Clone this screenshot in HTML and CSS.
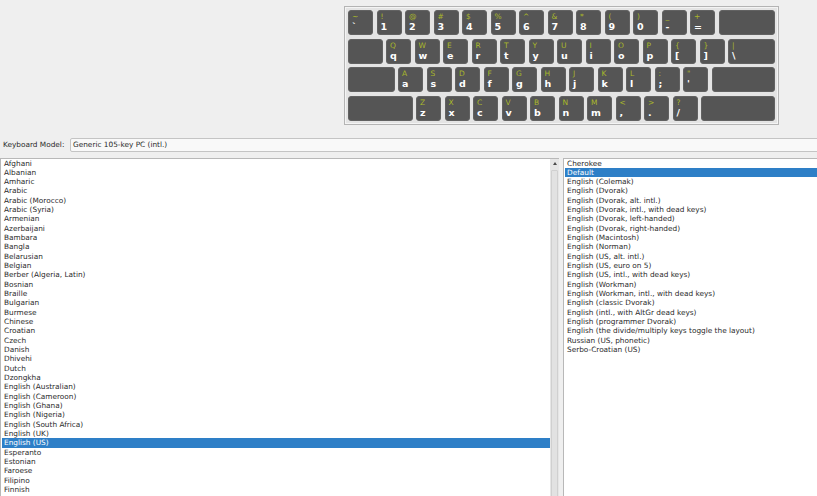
FILE: index.html
```html
<!DOCTYPE html>
<html>
<head>
<meta charset="utf-8">
<link rel="stylesheet" href="styles.css">
</head>
<body>
<div class="top">
  <div class="kbd">
    <div class="krow">
      <div class="key"><span class="up">~</span><span class="lo">`</span></div>
      <div class="key"><span class="up">!</span><span class="lo">1</span></div>
      <div class="key"><span class="up">@</span><span class="lo">2</span></div>
      <div class="key"><span class="up">#</span><span class="lo">3</span></div>
      <div class="key"><span class="up">$</span><span class="lo">4</span></div>
      <div class="key"><span class="up">%</span><span class="lo">5</span></div>
      <div class="key"><span class="up">^</span><span class="lo">6</span></div>
      <div class="key"><span class="up">&amp;</span><span class="lo">7</span></div>
      <div class="key"><span class="up">*</span><span class="lo">8</span></div>
      <div class="key"><span class="up">(</span><span class="lo">9</span></div>
      <div class="key"><span class="up">)</span><span class="lo">0</span></div>
      <div class="key"><span class="up">_</span><span class="lo">-</span></div>
      <div class="key"><span class="up">+</span><span class="lo">=</span></div>
      <div class="key fill"></div>
    </div>
    <div class="krow">
      <div class="key tab"></div>
      <div class="key"><span class="up">Q</span><span class="lo">q</span></div>
      <div class="key"><span class="up">W</span><span class="lo">w</span></div>
      <div class="key"><span class="up">E</span><span class="lo">e</span></div>
      <div class="key"><span class="up">R</span><span class="lo">r</span></div>
      <div class="key"><span class="up">T</span><span class="lo">t</span></div>
      <div class="key"><span class="up">Y</span><span class="lo">y</span></div>
      <div class="key"><span class="up">U</span><span class="lo">u</span></div>
      <div class="key"><span class="up">I</span><span class="lo">i</span></div>
      <div class="key"><span class="up">O</span><span class="lo">o</span></div>
      <div class="key"><span class="up">P</span><span class="lo">p</span></div>
      <div class="key"><span class="up">{</span><span class="lo">[</span></div>
      <div class="key"><span class="up">}</span><span class="lo">]</span></div>
      <div class="key fill"><span class="up">|</span><span class="lo">\</span></div>
    </div>
    <div class="krow">
      <div class="key caps"></div>
      <div class="key"><span class="up">A</span><span class="lo">a</span></div>
      <div class="key"><span class="up">S</span><span class="lo">s</span></div>
      <div class="key"><span class="up">D</span><span class="lo">d</span></div>
      <div class="key"><span class="up">F</span><span class="lo">f</span></div>
      <div class="key"><span class="up">G</span><span class="lo">g</span></div>
      <div class="key"><span class="up">H</span><span class="lo">h</span></div>
      <div class="key"><span class="up">J</span><span class="lo">j</span></div>
      <div class="key"><span class="up">K</span><span class="lo">k</span></div>
      <div class="key"><span class="up">L</span><span class="lo">l</span></div>
      <div class="key"><span class="up">:</span><span class="lo">;</span></div>
      <div class="key"><span class="up">"</span><span class="lo">'</span></div>
      <div class="key fill"></div>
    </div>
    <div class="krow">
      <div class="key shift"></div>
      <div class="key"><span class="up">Z</span><span class="lo">z</span></div>
      <div class="key"><span class="up">X</span><span class="lo">x</span></div>
      <div class="key"><span class="up">C</span><span class="lo">c</span></div>
      <div class="key"><span class="up">V</span><span class="lo">v</span></div>
      <div class="key"><span class="up">B</span><span class="lo">b</span></div>
      <div class="key"><span class="up">N</span><span class="lo">n</span></div>
      <div class="key"><span class="up">M</span><span class="lo">m</span></div>
      <div class="key"><span class="up">&lt;</span><span class="lo">,</span></div>
      <div class="key"><span class="up">&gt;</span><span class="lo">.</span></div>
      <div class="key"><span class="up">?</span><span class="lo">/</span></div>
      <div class="key fill"></div>
    </div>
  </div>
</div>

<div class="model-row">
  <span class="model-label">Keyboard Model:</span>
  <div class="combo">Generic 105-key PC (intl.)</div>
</div>

<div class="lists">
  <div class="list left">
    <div class="item">Afghani</div>
    <div class="item">Albanian</div>
    <div class="item">Amharic</div>
    <div class="item">Arabic</div>
    <div class="item">Arabic (Morocco)</div>
    <div class="item">Arabic (Syria)</div>
    <div class="item">Armenian</div>
    <div class="item">Azerbaijani</div>
    <div class="item">Bambara</div>
    <div class="item">Bangla</div>
    <div class="item">Belarusian</div>
    <div class="item">Belgian</div>
    <div class="item">Berber (Algeria, Latin)</div>
    <div class="item">Bosnian</div>
    <div class="item">Braille</div>
    <div class="item">Bulgarian</div>
    <div class="item">Burmese</div>
    <div class="item">Chinese</div>
    <div class="item">Croatian</div>
    <div class="item">Czech</div>
    <div class="item">Danish</div>
    <div class="item">Dhivehi</div>
    <div class="item">Dutch</div>
    <div class="item">Dzongkha</div>
    <div class="item">English (Australian)</div>
    <div class="item">English (Cameroon)</div>
    <div class="item">English (Ghana)</div>
    <div class="item">English (Nigeria)</div>
    <div class="item">English (South Africa)</div>
    <div class="item">English (UK)</div>
    <div class="item sel">English (US)</div>
    <div class="item">Esperanto</div>
    <div class="item">Estonian</div>
    <div class="item">Faroese</div>
    <div class="item">Filipino</div>
    <div class="item">Finnish</div>
  </div>
  <div class="scrollbar">
    <div class="sb-arrow"></div>
    <div class="sb-thumb"></div>
  </div>
  <div class="list right">
    <div class="item">Cherokee</div>
    <div class="item sel">Default</div>
    <div class="item">English (Colemak)</div>
    <div class="item">English (Dvorak)</div>
    <div class="item">English (Dvorak, alt. intl.)</div>
    <div class="item">English (Dvorak, intl., with dead keys)</div>
    <div class="item">English (Dvorak, left-handed)</div>
    <div class="item">English (Dvorak, right-handed)</div>
    <div class="item">English (Macintosh)</div>
    <div class="item">English (Norman)</div>
    <div class="item">English (US, alt. intl.)</div>
    <div class="item">English (US, euro on 5)</div>
    <div class="item">English (US, intl., with dead keys)</div>
    <div class="item">English (Workman)</div>
    <div class="item">English (Workman, intl., with dead keys)</div>
    <div class="item">English (classic Dvorak)</div>
    <div class="item">English (intl., with AltGr dead keys)</div>
    <div class="item">English (programmer Dvorak)</div>
    <div class="item">English (the divide/multiply keys toggle the layout)</div>
    <div class="item">Russian (US, phonetic)</div>
    <div class="item">Serbo-Croatian (US)</div>
  </div>
</div>
</body>
</html>
```

FILE: styles.css
```css
html, body {
  margin: 0;
  padding: 0;
  width: 817px;
  height: 496px;
  overflow: hidden;
  background: #efefef;
  font-family: "DejaVu Sans", "Liberation Sans", sans-serif;
  font-size: 7.35px;
  color: #2a2a2a;
}

.top {
  display: flex;
  padding-top: 6px;
  padding-left: 344px;
}

.kbd {
  width: 427px;
  padding: 3px 3px 3px 3px;
  border: 1px solid #b4b4b4;
  background: #e4e4e4;
  box-shadow: inset 0 0 0 1px #f4f4f4;
  display: flex;
  flex-direction: column;
  gap: 3.5px;
}

.krow {
  display: flex;
  gap: 3.5px;
}

.key {
  width: 25px;
  height: 25px;
  box-sizing: border-box;
  flex: none;
  background: #555555;
  border: 1px solid #626262;
  border-radius: 3px;
  display: flex;
  flex-direction: column;
  padding: 2px 0 0 3px;
}

.key.fill { flex: 1; }
.key.tab { width: 34.5px; }
.key.caps { width: 46.5px; }
.key.shift { width: 64.5px; }

.up {
  font-size: 7.5px;
  line-height: 8px;
  color: #a9b82a;
}

.lo {
  font-size: 9.5px;
  line-height: 10px;
  margin-top: 1px;
  font-weight: bold;
  color: #ffffff;
}

.model-row {
  display: flex;
  align-items: center;
  margin-top: 13px;
  padding-left: 3px;
  gap: 5px;
}

.model-label {
  width: 62px;
  white-space: nowrap;
}

.combo {
  flex: 1;
  height: 14px;
  box-sizing: border-box;
  margin-right: -4px;
  border: 1px solid #c4c4c4;
  border-radius: 2px;
  background: #f9f9f9;
  padding-left: 2px;
  line-height: 12px;
}

.lists {
  display: flex;
  margin-top: 6px;
  height: 340px;
}

.list {
  box-sizing: border-box;
  background: #ffffff;
  border-top: 1px solid #b8b8b8;
  border-left: 1px solid #b8b8b8;
  padding: 0 0 0 1px;
  overflow: hidden;
}

.list.left {
  width: 550px;
}

.list.right {
  flex: 1;
  margin-left: 4px;
}

.item {
  height: 9.34px;
  line-height: 9.34px;
  padding-left: 2px;
  white-space: nowrap;
}

.item.sel {
  background: #2e7fc7;
  color: #ffffff;
}

.scrollbar {
  width: 9px;
  flex: none;
  background: #e6e6e6;
  border-top: 1px solid #b8b8b8;
  display: flex;
  flex-direction: column;
  align-items: center;
}

.sb-arrow {
  margin-top: 3px;
  width: 0;
  height: 0;
  border-left: 2.5px solid transparent;
  border-right: 2.5px solid transparent;
  border-bottom: 3px solid #4a4a4a;
}

.sb-thumb {
  margin-top: 5px;
  width: 7px;
  flex: 1;
  box-sizing: border-box;
  background: #e2e2e2;
  border: 1px solid #d0d0d0;
  border-radius: 1px;
}
```
